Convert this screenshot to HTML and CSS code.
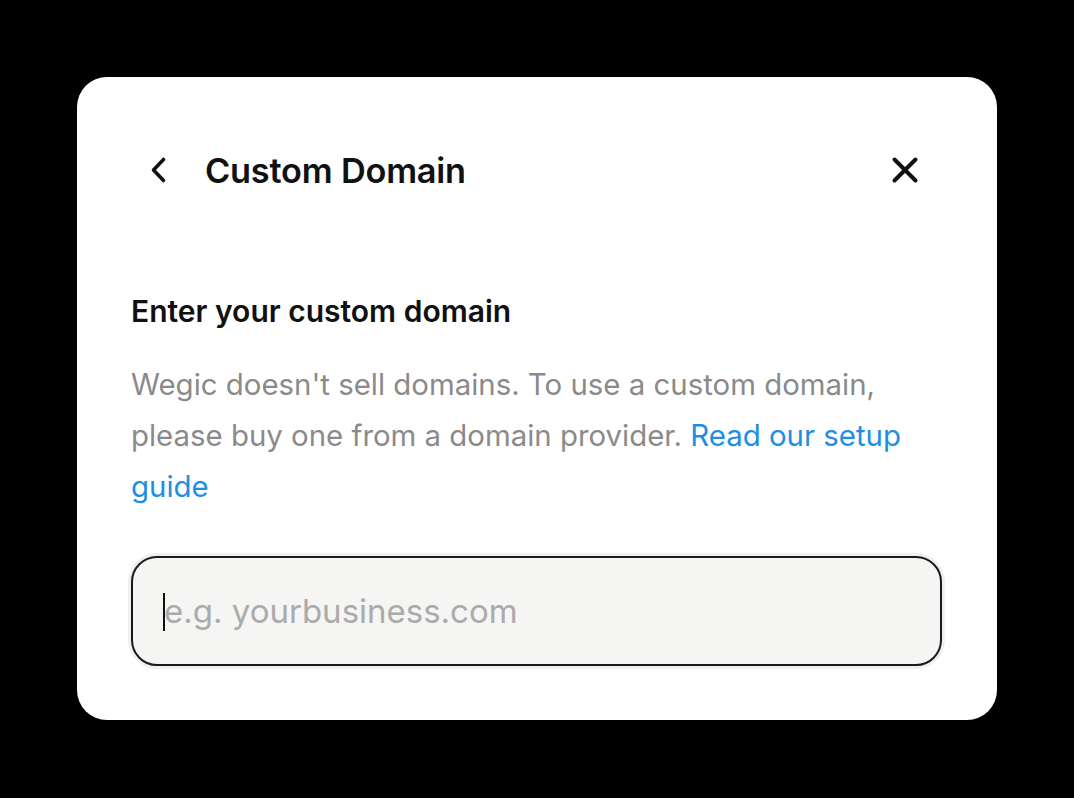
FILE: index.html
```html
<!DOCTYPE html>
<html lang="en">
<head>
<meta charset="utf-8">
<link rel="stylesheet" href="styles.css">
</head>
<body>
<div class="card">
  <div class="header">
    <button class="icon-btn back" aria-label="Back">
      <svg width="20" height="28" viewBox="0 0 20 28"><path d="M15.5 3.5 L5.5 14 L15.5 24.5" fill="none" stroke="#111" stroke-width="3.6" stroke-linecap="round" stroke-linejoin="round"/></svg>
    </button>
    <h1 class="title">Custom Domain</h1>
    <button class="icon-btn close" aria-label="Close">
      <svg width="28" height="28" viewBox="0 0 28 28"><path d="M3.5 3.5 L24.5 24.5 M24.5 3.5 L3.5 24.5" fill="none" stroke="#111" stroke-width="4" stroke-linecap="round"/></svg>
    </button>
  </div>
  <div class="body">
    <h2 class="label">Enter your custom domain</h2>
    <p class="desc">Wegic doesn't sell domains. To use a custom domain, please buy one from a domain provider. <a class="link" href="#">Read our setup guide</a></p>
    <div class="field">
      <span class="caret"></span>
      <input class="input" type="text" placeholder="e.g. yourbusiness.com">
    </div>
  </div>
</div>
</body>
</html>
```
FILE: styles.css
```css
html, body {
  margin: 0;
  padding: 0;
  background: #000;
  width: 1074px;
  height: 798px;
  overflow: hidden;
  font-family: "Inter", "Noto Sans", sans-serif;
}
body {
  padding: 77px 77px 0 77px;
  box-sizing: border-box;
}
.card {
  width: 920px;
  height: 643px;
  background: #fff;
  border-radius: 30px;
  box-sizing: border-box;
  padding: 0 54px 0 54px;
}
.header {
  display: flex;
  align-items: center;
  height: 186px;
  box-sizing: border-box;
}
.icon-btn {
  background: none;
  border: 0;
  padding: 0;
  display: flex;
  align-items: center;
  justify-content: center;
  cursor: pointer;
}
.back {
  margin-left: 17px;
  width: 20px;
  height: 28px;
}
.title {
  margin: 0 0 0 37px;
  font-size: 34.3px;
  font-weight: 600;
  color: #111;
  letter-spacing: -0.2px;
  flex: 1;
}
.close {
  width: 28px;
  height: 28px;
  margin-right: 24px;
}
.body {
  padding-top: 33px;
}
.label {
  margin: 0;
  font-size: 30px;
  font-weight: 600;
  color: #111;
  line-height: 30px;
}
.desc {
  margin: 33px 0 0 0;
  font-size: 29.4px;
  line-height: 51px;
  color: #8a8a8a;
}
.link {
  color: #1c8ee3;
  text-decoration: none;
}
.field {
  position: relative;
  margin-top: 44px;
  margin-left: 0;
  height: 110px;
  border: 2px solid #1a1a1a;
  border-radius: 26px;
  background: #f5f5f4;
  box-shadow: 0 0 0 3px #efefef;
  box-sizing: border-box;
  display: flex;
  align-items: center;
  width: 811px;
}
.input {
  flex: 1;
  border: 0;
  background: transparent;
  outline: none;
  font-family: inherit;
  font-size: 33px;
  color: #111;
  padding: 0 0 0 31px;
  height: 100%;
}
.input::placeholder {
  color: #ababab;
}
.caret {
  position: absolute;
  left: 30px;
  top: 35px;
  width: 2px;
  height: 38px;
  background: #111;
}
```
